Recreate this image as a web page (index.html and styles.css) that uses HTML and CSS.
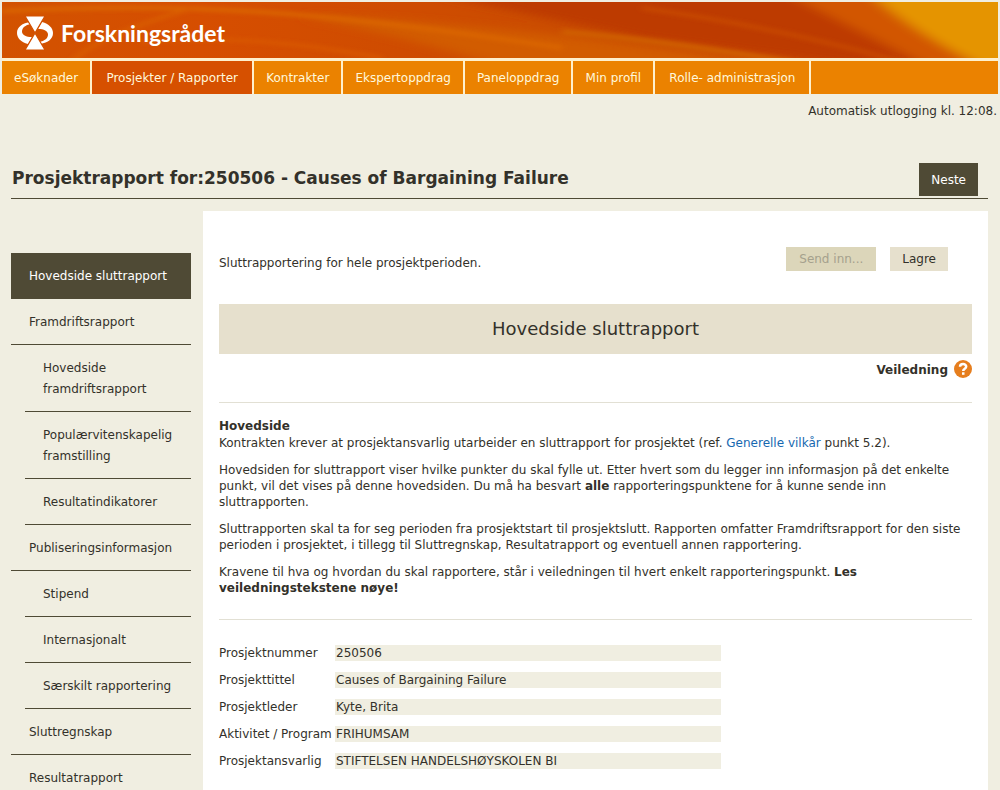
FILE: index.html
```html
<!DOCTYPE html>
<html lang="no">
<head>
<meta charset="utf-8">
<title>Forskningsrådet – Prosjektrapport</title>
<link rel="stylesheet" href="styles.css">
</head>
<body>
<header class="site-header">
  <div class="banner">
    <svg class="banner-art" viewBox="0 0 996 56" preserveAspectRatio="none" aria-hidden="true">
      <defs>
        <linearGradient id="base" x1="0" y1="0" x2="1" y2="0">
          <stop offset="0" stop-color="#d25200"/>
          <stop offset=".2" stop-color="#d64e00"/>
          <stop offset=".4" stop-color="#cf4c00"/>
          <stop offset=".6" stop-color="#c94c00"/>
          <stop offset=".85" stop-color="#c84600"/>
          <stop offset="1" stop-color="#d87000"/>
        </linearGradient>
        <filter id="soft" x="-20%" y="-50%" width="140%" height="200%"><feGaussianBlur stdDeviation="7 4"/></filter>
        <filter id="fine" x="-20%" y="-50%" width="140%" height="200%"><feGaussianBlur stdDeviation="3 2"/></filter>
      </defs>
      <rect width="996" height="56" fill="url(#base)"/>
      <g filter="url(#soft)">
        <path d="M430 -8 L800 -8 L960 64 L860 64 L640 36 Z" fill="#bd3b00"/>
        <path d="M330 14 Q500 22 790 64 L500 64 Q400 34 300 14 Z" fill="#d25c00"/>
        <path d="M780 -10 L900 -10 L1010 66 L930 66 Q860 30 780 -10 Z" fill="#d25600"/>
        <path d="M865 -10 L1010 -10 L1010 66 L985 66 Q920 36 865 -10 Z" fill="#e59400"/>
      </g>
      <g filter="url(#fine)" fill="none">
        <path d="M0 9 Q140 2 260 10 T560 46" stroke="#db6600" stroke-width="4"/>
        <path d="M70 60 Q90 36 190 6" stroke="#da6000" stroke-width="3"/>
        <path d="M140 40 Q240 30 380 56" stroke="#da5a00" stroke-width="3"/>
        <path d="M560 30 Q660 38 800 62" stroke="#d06000" stroke-width="5"/>
        <path d="M640 6 Q780 26 900 60" stroke="#c84a00" stroke-width="4"/>
      </g>
    </svg>
    <a class="brand" href="#">
      <svg class="brand-mark" viewBox="0 0 36 34" aria-hidden="true">
        <path d="M14 6C5 7 0 11 0 17C0 22 4 26 11 28L15 21C9 21 5 19 5 15.500C5 12 8 9 14 8Z" fill="#fff"/>
        <path d="M22 28C31 27 36 23 36 17C36 12 32 8 25 6L21 13C27 13 31 15 31 18.500C31 22 28 25 22 26Z" fill="#fff"/>
        <path d="M8 0H28L18 17L28 34H8L18 17Z" fill="#fff" stroke="#d25000" stroke-width="1.200"/>
      </svg>
      <span>Forskningsrådet</span>
    </a>
  </div>
  <nav class="tabs">
    <a href="#">eSøknader</a>
    <a href="#" class="current">Prosjekter / Rapporter</a>
    <a href="#">Kontrakter</a>
    <a href="#">Ekspertoppdrag</a>
    <a href="#">Paneloppdrag</a>
    <a href="#">Min profil</a>
    <a href="#" class="admin">Rolle- administrasjon</a>
  </nav>
</header>
<p class="logout-note">Automatisk utlogging kl. 12:08.</p>
<div class="page">
  <div class="title-row">
    <h1>Prosjektrapport for:250506 - Causes of Bargaining Failure</h1>
    <button type="button" class="next">Neste</button>
  </div>
  <div class="columns">
    <nav class="side">
      <a href="#" class="current">Hovedside sluttrapport</a>
      <a href="#">Framdriftsrapport</a>
      <a href="#" class="sub">Hovedside framdriftsrapport</a>
      <a href="#" class="sub">Populærvitenskapelig framstilling</a>
      <a href="#" class="sub">Resultatindikatorer</a>
      <a href="#">Publiseringsinformasjon</a>
      <a href="#" class="sub">Stipend</a>
      <a href="#" class="sub">Internasjonalt</a>
      <a href="#" class="sub">Særskilt rapportering</a>
      <a href="#">Sluttregnskap</a>
      <a href="#">Resultatrapport</a>
    </nav>
    <main class="panel">
      <div class="actions">
        <p>Sluttrapportering for hele prosjektperioden.</p>
        <button type="button" class="submit" disabled>Send inn...</button>
        <button type="button">Lagre</button>
      </div>
      <h2>Hovedside sluttrapport</h2>
      <a class="guide" href="#">Veiledning
        <svg viewBox="0 0 18 18" aria-hidden="true">
          <circle cx="9" cy="9" r="9" fill="#e67e1e"/>
          <path d="M6 6.800C6 3.200 12.200 3.200 12.200 6.600C12.200 8.800 9.200 8.600 9.200 11" fill="none" stroke="#fff" stroke-width="2.500"/>
          <rect x="8" y="12.300" width="2.500" height="2.500" fill="#fff"/>
        </svg>
      </a>
      <section class="intro">
        <h3>Hovedside</h3>
        <p>Kontrakten krever at prosjektansvarlig utarbeider en sluttrapport for prosjektet (ref. <a href="#">Generelle vilkår</a> punkt 5.2).</p>
        <p>Hovedsiden for sluttrapport viser hvilke punkter du skal fylle ut. Etter hvert som du legger inn informasjon på det enkelte punkt, vil det vises på denne hovedsiden. Du må ha besvart <strong>alle</strong> rapporteringspunktene for å kunne sende inn sluttrapporten.</p>
        <p>Sluttrapporten skal ta for seg perioden fra prosjektstart til prosjektslutt. Rapporten omfatter Framdriftsrapport for den siste perioden i prosjektet, i tillegg til Sluttregnskap, Resultatrapport og eventuell annen rapportering.</p>
        <p>Kravene til hva og hvordan du skal rapportere, står i veiledningen til hvert enkelt rapporteringspunkt. <strong>Les veiledningstekstene nøye!</strong></p>
      </section>
      <dl class="facts">
        <dt>Prosjektnummer</dt><dd>250506</dd>
        <dt>Prosjekttittel</dt><dd>Causes of Bargaining Failure</dd>
        <dt>Prosjektleder</dt><dd>Kyte, Brita</dd>
        <dt>Aktivitet / Program</dt><dd>FRIHUMSAM</dd>
        <dt>Prosjektansvarlig</dt><dd>STIFTELSEN HANDELSHØYSKOLEN BI</dd>
      </dl>
    </main>
  </div>
</div>
</body>
</html>
```
FILE: styles.css
```css
* { box-sizing: border-box; }

body {
  margin: 0;
  padding: 2px 2px 0;
  background: #f0eee1;
  color: #33312a;
  font: 12px/16px Verdana, "DejaVu Sans", sans-serif;
}

h1, h2, h3, p, dl, dd { margin: 0; }
a { color: inherit; text-decoration: none; }
button { border: 0; font: inherit; color: inherit; }

.site-header {
  display: flex;
  flex-direction: column;
  gap: 3px;
  background: #fff0cc;
}
.banner {
  position: relative;
  height: 56px;
  overflow: hidden;
}
.banner-art {
  position: absolute;
  inset: 0;
  width: 100%;
  height: 100%;
}
.brand {
  position: relative;
  display: inline-flex;
  align-items: center;
  gap: 8px;
  padding: 14px 15px;
  color: #fff;
  font: 700 23px/34px Lato, sans-serif;
}
.brand-mark { width: 36px; height: 34px; }

.tabs { display: flex; gap: 2px; }
.tabs a {
  min-width: 80px;
  padding: 9px 12px 8px;
  background: #eb8200;
  color: #fff8dc;
  text-align: center;
}
.tabs .current { min-width: 160px; background: #d65000; }
.tabs .admin { min-width: 154px; }
.tabs::after { content: ""; flex: 1; background: #eb8200; }

.logout-note { padding: 9px 1px 0; text-align: right; }

.page { padding: 44px 10px 0 9px; }
.title-row {
  display: flex;
  justify-content: space-between;
  padding: 0 10px 2px 1px;
  border-bottom: 1px solid #4f4a35;
}
h1 { font-size: 17px; line-height: 30px; }
.next {
  padding: 9px 12px 8px;
  background: #4f4a35;
  color: #fff;
}

.columns {
  display: flex;
  align-items: stretch;
  gap: 12px;
  padding-top: 12px;
}
.side {
  display: flex;
  flex-direction: column;
  flex: 0 0 180px;
  padding-top: 42px;
}
.side a {
  padding: 13px 18px 11px;
  border-bottom: 1px solid #4f4a35;
  line-height: 21px;
}
.side .sub { margin-left: 14px; }
.side .current { background: #4f4a35; color: #fff; }

.panel {
  flex: 1;
  min-width: 0;
  padding: 36px 16px;
  background: #fff;
}
.actions {
  display: flex;
  gap: 14px;
  align-items: center;
  padding-right: 24px;
  margin-bottom: 33px;
}
.actions p { flex: 1; padding-top: 8px; }
.actions button {
  padding: 4px 12px;
  background: #e6e0cd;
}
.actions .submit { min-width: 90px; }
.actions button:disabled { background: #dcd6ba; color: #a5a18d; }

h2 {
  background: #e6e0cd;
  font-size: 18px;
  font-weight: 400;
  line-height: 50px;
  text-align: center;
}
.guide {
  display: flex;
  justify-content: flex-end;
  align-items: flex-end;
  gap: 6px;
  padding: 6px 0 24px;
  font-weight: 700;
}
.guide svg { width: 18px; height: 18px; }

.intro {
  padding: 14px 0 23px;
  border: solid #e2e0d4;
  border-width: 1px 0;
}
.intro h3 { font-size: 12px; line-height: 18px; }
.intro p { margin-bottom: 11px; }
.intro p:last-child { margin-bottom: 0; }
.intro a { color: #1668b0; }

.facts {
  display: grid;
  grid-template-columns: 116px minmax(0, 386px);
  row-gap: 11px;
  padding-top: 25px;
}
.facts dt { white-space: nowrap; }
.facts dd { padding-left: 1px; background: #f0eee1; }
```
